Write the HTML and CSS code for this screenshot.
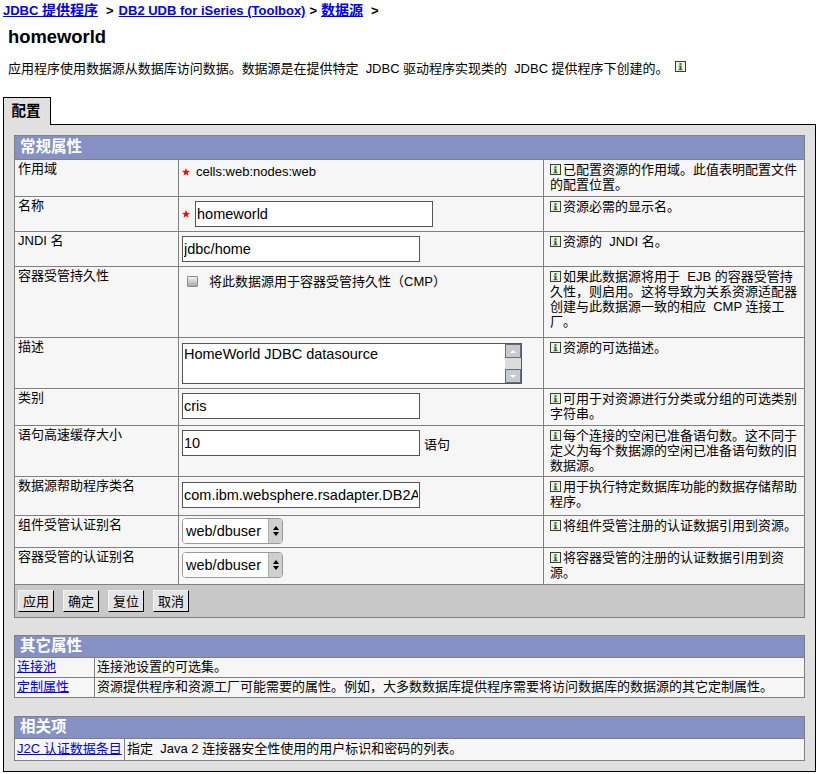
FILE: index.html
```html
<!DOCTYPE html>
<html lang="zh-CN">
<head>
<meta charset="utf-8">
<title>homeworld</title>
<link rel="stylesheet" href="styles.css">
</head>
<body>
<svg class="defs" width="0" height="0" aria-hidden="true">
  <defs>
    <symbol id="info" viewBox="0 0 11 11">
      <rect x="0.5" y="0.5" width="10" height="10" fill="#eef2e4" stroke="#3a3f34"/>
      <rect x="4.5" y="2" width="2" height="2" fill="#2f8a2f"/>
      <rect x="4.5" y="4.6" width="2" height="4.4" fill="#1f6a1f"/>
      <rect x="3.5" y="4.6" width="1" height="1" fill="#4f8a4f"/>
      <rect x="3.5" y="8.2" width="4" height="1" fill="#2f6a2f"/>
    </symbol>
    <symbol id="star" viewBox="0 0 10 10">
      <polygon points="5,0 6.3,3.4 10,3.6 7.1,5.8 8.1,9.6 5,7.4 1.9,9.6 2.9,5.8 0,3.6 3.7,3.4" fill="#e01010"/>
    </symbol>
  </defs>
</svg>
<nav class="crumbs">
  <a href="#">JDBC <span class="cjk">提供程序</span></a><span class="sep sep-wide">&gt;</span><a href="#">DB2 UDB for iSeries (Toolbox)</a><span class="sep">&gt;</span><a href="#"><span class="cjk">数据源</span></a><span class="sep sep-wide">&gt;</span>
</nav>
<h1 class="title">homeworld</h1>
<p class="intro">应用程序使用数据源从数据库访问数据。数据源是在提供特定&nbsp; JDBC 驱动程序实现类的&nbsp; JDBC 提供程序下创建的。<svg class="info info-intro"><use href="#info"/></svg></p>

<div class="tabs"><span class="tab">配置</span></div>
<main class="panel">
  <table class="grid">
    <colgroup><col class="c-label"><col class="c-value"><col></colgroup>
    <thead><tr class="head"><th colspan="3">常规属性</th></tr></thead>
    <tbody>
      <tr class="r37">
        <td>作用域</td>
        <td class="value"><div class="req-static"><svg class="star"><use href="#star"/></svg><span>cells:web:nodes:web</span></div></td>
        <td class="desc"><svg class="info"><use href="#info"/></svg>已配置资源的作用域。此值表明配置文件的配置位置。</td>
      </tr>
      <tr class="r35">
        <td>名称</td>
        <td class="value"><div class="req"><svg class="star"><use href="#star"/></svg><input class="text" value="homeworld"></div></td>
        <td class="desc"><svg class="info"><use href="#info"/></svg>资源必需的显示名。</td>
      </tr>
      <tr class="r35">
        <td>JNDI 名</td>
        <td class="value"><input class="text" value="jdbc/home"></td>
        <td class="desc"><svg class="info"><use href="#info"/></svg>资源的&nbsp; JNDI 名。</td>
      </tr>
      <tr class="r71">
        <td>容器受管持久性</td>
        <td class="value"><label class="check"><input type="checkbox" class="box"><span>将此数据源用于容器受管持久性（CMP）</span></label></td>
        <td class="desc"><svg class="info"><use href="#info"/></svg>如果此数据源将用于&nbsp; EJB 的容器受管持久性，则启用。这将导致为关系资源适配器创建与此数据源一致的相应&nbsp; CMP 连接工厂。</td>
      </tr>
      <tr class="r51">
        <td>描述</td>
        <td class="value"><div class="area"><textarea class="area-input" rows="2">HomeWorld JDBC datasource</textarea><div class="bar"><span class="bar-btn"><i class="up"></i></span><span class="bar-btn"><i class="down"></i></span></div></div></td>
        <td class="desc"><svg class="info"><use href="#info"/></svg>资源的可选描述。</td>
      </tr>
      <tr class="r37">
        <td>类别</td>
        <td class="value"><input class="text" value="cris"></td>
        <td class="desc"><svg class="info"><use href="#info"/></svg>可用于对资源进行分类或分组的可选类别字符串。</td>
      </tr>
      <tr class="r51">
        <td>语句高速缓存大小</td>
        <td class="value"><div class="unit"><input class="text" value="10"><span>语句</span></div></td>
        <td class="desc"><svg class="info"><use href="#info"/></svg>每个连接的空闲已准备语句数。这不同于定义为每个数据源的空闲已准备语句数的旧数据源。</td>
      </tr>
      <tr class="r39">
        <td>数据源帮助程序类名</td>
        <td class="value value-low"><input class="text" value="com.ibm.websphere.rsadapter.DB2AS400DataStoreHelper"></td>
        <td class="desc"><svg class="info"><use href="#info"/></svg>用于执行特定数据库功能的数据存储帮助程序。</td>
      </tr>
      <tr class="r32">
        <td>组件受管认证别名</td>
        <td class="value value-high"><div class="pick"><select class="pick-input"><option>web/dbuser</option></select><span class="pick-arrows"><i class="up"></i><i class="down"></i></span></div></td>
        <td class="desc"><svg class="info"><use href="#info"/></svg>将组件受管注册的认证数据引用到资源。</td>
      </tr>
      <tr class="r37">
        <td>容器受管的认证别名</td>
        <td class="value"><div class="pick"><select class="pick-input"><option>web/dbuser</option></select><span class="pick-arrows"><i class="up"></i><i class="down"></i></span></div></td>
        <td class="desc"><svg class="info"><use href="#info"/></svg>将容器受管的注册的认证数据引用到资源。</td>
      </tr>
      <tr class="actions">
        <td colspan="3"><div class="btns"><button>应用</button><button>确定</button><button>复位</button><button>取消</button></div></td>
      </tr>
    </tbody>
  </table>

  <table class="grid grid-small">
    <colgroup><col class="c-link"><col></colgroup>
    <thead><tr class="head"><th colspan="2">其它属性</th></tr></thead>
    <tbody>
      <tr class="r20"><td><a href="#">连接池</a></td><td>连接池设置的可选集。</td></tr>
      <tr class="r20"><td><a href="#">定制属性</a></td><td>资源提供程序和资源工厂可能需要的属性。例如，大多数数据库提供程序需要将访问数据库的数据源的其它定制属性。</td></tr>
    </tbody>
  </table>

  <table class="grid grid-small">
    <colgroup><col class="c-rel"><col></colgroup>
    <thead><tr class="head"><th colspan="2">相关项</th></tr></thead>
    <tbody>
      <tr class="r22"><td><a href="#">J2C 认证数据条目</a></td><td>指定&nbsp; Java 2 连接器安全性使用的用户标识和密码的列表。</td></tr>
    </tbody>
  </table>
</main>
</body>
</html>
```

FILE: styles.css
```css
* { box-sizing: border-box; }
html, body { margin: 0; padding: 0; background: #fff; }
body {
  font-family: "Liberation Sans", "Noto Sans CJK SC", sans-serif;
  font-size: 13px;
  line-height: 15px;
  color: #000;
  height: 774px;
  overflow: hidden;
}
a { color: #0000ee; }
.defs { position: absolute; }

.crumbs { height: 21px; padding: 3px 0 0 3px; font-size: 13px; font-weight: bold; white-space: nowrap; }
.cjk { font-size: 14px; }
.sep { margin: 0 4px; color: #000; }
.sep-wide { margin: 0 5px 0 8px; }

.title { margin: 0; height: 27px; padding: 5px 0 0 8px; font-size: 18.4px; line-height: 22px; font-weight: bold; }

.intro { margin: 0; height: 49px; padding: 13px 0 0 8px; white-space: nowrap; letter-spacing: -0.02px; }
.info-intro { margin-left: 7px; position: relative; top: -2px; }

.tabs { display: flex; height: 27px; padding-left: 3px; }
.tab {
  width: 48px; height: 28px;
  background: #e0e0e0;
  border: 1px solid #000; border-bottom: 0;
  font-size: 14.5px; font-weight: bold; text-align: center; line-height: 26px;
  position: relative; z-index: 1;
  padding-right: 2px;
}

.panel {
  margin-left: 3px; width: 813px; height: 648px;
  background: #e0e0e0;
  border: 1px solid #000;
  padding: 10px 10px 0;
  display: flex; flex-direction: column; gap: 17px;
}

.grid {
  width: 791px; table-layout: fixed; border-collapse: collapse;
  background: #f6f6f6;
  flex: none;
}
.grid-small + .grid-small { margin-top: 1px; }
.grid td, .grid th { border: 1px solid #808080; vertical-align: top; }
.grid td { padding: 1px 3px 0; word-break: break-all; }
.c-label { width: 164px; }
.c-value { width: 365px; }
.c-link { width: 80px; }
.c-rel { width: 110px; }

.head th {
  height: 24px; background: #8591c5; color: #fff;
  text-align: left; padding: 0 0 0 5px;
  font-size: 15.5px; font-weight: bold; line-height: 22px;
}
.grid-small .head th { height: 22px; line-height: 20px; }
.grid .r20 td { height: 20px; padding: 1px 2px 0; white-space: nowrap; }
.grid .r22 td { height: 22px; padding: 2px 2px 0; white-space: nowrap; }
.r32 td { height: 32px; }
.r35 td { height: 35px; }
.r37 td { height: 37px; }
.r39 td { height: 39px; }
.r51 td { height: 51px; }
.r71 td { height: 71px; }

.grid .value { padding: 4px 3px 0; }
.grid .value-low { padding-top: 5px; }
.grid .value-high { padding-top: 2px; }
.grid .desc { padding: 2px 5px 0 6px; }

.info { width: 11px; height: 11px; margin-right: 2px; vertical-align: -1px; }
.star { width: 8px; height: 8px; flex: none; }

.text {
  display: block; width: 238px; height: 26px;
  padding: 0 1px;
  border: 1px solid #555; background: #fff;
  font: 14.5px "Liberation Sans", sans-serif; color: #000;
  border-radius: 0; outline: 0;
}
.req { display: flex; align-items: center; gap: 5px; }
.req-static { display: flex; align-items: center; gap: 6px; }
.req .text { width: 238px; }

.unit { display: flex; align-items: flex-end; gap: 4px; }
.unit span { padding-bottom: 4px; }

.check { display: flex; align-items: center; gap: 11px; padding: 3px 0 0 5px; }
.box {
  appearance: none; margin: 0; width: 11px; height: 11px; flex: none;
  border: 1px solid #8c8c8c; border-radius: 1px;
  background: linear-gradient(#f2f2f2, #a8a8a8);
}

.area {
  display: flex; width: 340px; height: 41px; margin-top: 1px;
  border: 1px solid #555; background: #fff;
}
.area-input {
  flex: 1; min-width: 0; border: 0; outline: 0; resize: none; overflow: hidden;
  padding: 2px 1px; background: #fff; color: #000;
  font: 14.5px/17px "Liberation Sans", sans-serif;
}
.bar {
  width: 16px; flex: none; background: #dcdcdc;
  display: flex; flex-direction: column; justify-content: space-between;
}
.bar-btn {
  width: 16px; height: 14px;
  background: #c8cacd; border: 1px solid #5f6f88;
  display: flex; align-items: center; justify-content: center;
}
.up, .down { display: block; width: 0; height: 0; border-left: 3px solid transparent; border-right: 3px solid transparent; }
.bar-btn .up { border-bottom: 3px solid #fff; }
.bar-btn .down { border-top: 3px solid #fff; }

.pick {
  display: flex; width: 101px; height: 26px;
  border: 1px solid #999; border-radius: 4px; background: #fff; overflow: hidden;
}
.pick-input {
  appearance: none; flex: 1; min-width: 0; border: 0; outline: 0; padding: 0 0 0 3px;
  background: #fff; color: #000; font: 14.5px "Liberation Sans", sans-serif;
}
.pick-arrows {
  width: 14px; flex: none; background: #cfcfcf; border-left: 1px solid #aaa;
  display: flex; flex-direction: column; align-items: center; justify-content: center; gap: 2px;
}
.pick-arrows .up { border-bottom: 4px solid #000; }
.pick-arrows .down { border-top: 4px solid #000; }

.grid .actions td { height: 33px; padding: 5px 3px 0; background: #c8c8c8; }
.btns { display: flex; gap: 9px; }
.btns button {
  height: 22px; padding: 0 4px; margin: 0;
  background: #e4e4e4; color: #000;
  border: 1px solid; border-color: #f4f4f4 #000 #000 #f4f4f4;
  font: 13px/15px "Liberation Sans", "Noto Sans CJK SC", sans-serif;
}
```
